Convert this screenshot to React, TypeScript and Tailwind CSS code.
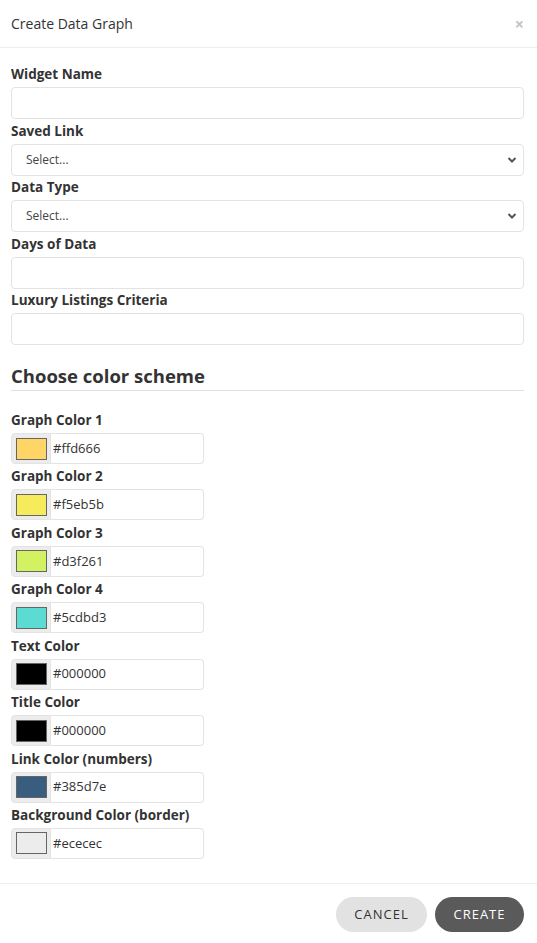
const colors = [
  { label: 'Graph Color 1', value: '#ffd666' },
  { label: 'Graph Color 2', value: '#f5eb5b' },
  { label: 'Graph Color 3', value: '#d3f261' },
  { label: 'Graph Color 4', value: '#5cdbd3' },
  { label: 'Text Color', value: '#000000' },
  { label: 'Title Color', value: '#000000' },
  { label: 'Link Color (numbers)', value: '#385d7e' },
  { label: 'Background Color (border)', value: '#ececec' },
];

function Label({ children }: { children: React.ReactNode }) {
  return <div className="h-5 mb-[3px] text-[13.5px] leading-5 font-bold text-[#333]">{children}</div>;
}

function TextField({ label }: { label: string }) {
  return (
    <div className="mb-[1.5px]">
      <Label>{label}</Label>
      <div className="h-8 rounded border border-[#e3e3e3] bg-white" />
    </div>
  );
}

function SelectField({ label }: { label: string }) {
  return (
    <div className="mb-[1.5px]">
      <Label>{label}</Label>
      <div className="h-8 rounded border border-[#e3e3e3] bg-white flex items-center justify-between pl-[14px] pr-[6px]">
        <span className="text-[12px] text-[#444] font-normal">Select...</span>
        <svg width="10" height="8" viewBox="0 0 10 8" fill="none">
          <path d="M1.5 2 L5 5.5 L8.5 2" stroke="#555" strokeWidth="2" />
        </svg>
      </div>
    </div>
  );
}

function ColorField({ label, value }: { label: string; value: string }) {
  return (
    <div className="mb-[2.43px]">
      <Label>{label}</Label>
      <div className="flex h-[31px] w-[193px]">
        <div className="w-[40px] bg-[#ececec] rounded-l border border-[#e3e3e3] flex items-center justify-center">
          <div className="w-[31px] h-[22px] border border-[#666]" style={{ backgroundColor: value }} />
        </div>
        <div className="flex-1 border border-l-0 border-[#e3e3e3] rounded-r bg-white flex items-center pl-[2px] text-[13px] text-[#333]">
          {value}
        </div>
      </div>
    </div>
  );
}

export default function App() {
  return (
    <div className="w-[537px] h-[943px] bg-white font-['Open_Sans',sans-serif] flex flex-col">
      <div className="h-[48px] border-b border-[#eeeeee] flex items-center justify-between pl-[11px] pr-[13px]">
        <span className="text-[14px] text-[#333]">Create Data Graph</span>
        <span className="text-[16px] leading-none text-[#c4c4c4] font-bold">×</span>
      </div>
      <div className="pl-[11px] pr-[13px] pt-[16px] flex-1">
        <TextField label="Widget Name" />
        <SelectField label="Saved Link" />
        <SelectField label="Data Type" />
        <TextField label="Days of Data" />
        <TextField label="Luxury Listings Criteria" />
        <div className="mt-[20px] pb-[3px] border-b border-[#e0e0e0] text-[18.5px] font-bold text-[#333] leading-[22px]">
          Choose color scheme
        </div>
        <div className="pt-[19px]">
          {colors.map((c) => (
            <ColorField key={c.label} label={c.label} value={c.value} />
          ))}
        </div>
      </div>
      <div className="h-[60px] border-t border-[#eeeeee] flex items-start justify-end gap-2 pt-[13px] pr-[13px]">
        <button className="h-[35px] w-[91px] rounded-full bg-[#e2e2e2] text-[#333] text-[13px] tracking-[1px]">
          CANCEL
        </button>
        <button className="h-[35px] w-[89px] rounded-full bg-[#5a5a5a] text-white text-[13px] tracking-[1px]">
          CREATE
        </button>
      </div>
    </div>
  );
}
